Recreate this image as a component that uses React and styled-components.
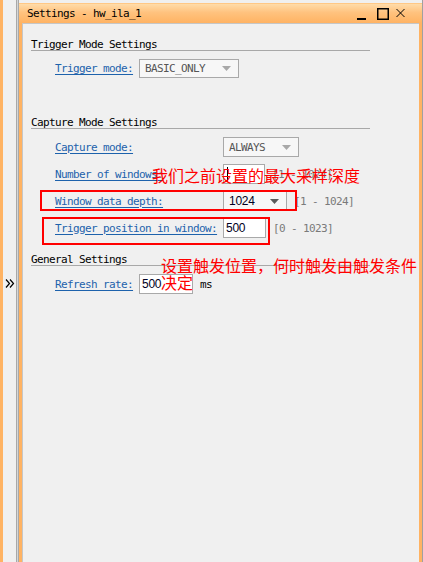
import React from 'react';
import styled, { createGlobalStyle } from 'styled-components';

const MONO = '"DejaVu Sans Mono", "Liberation Mono", monospace';
const ORANGE = '#ffb363';

const Global = createGlobalStyle`
  html, body { margin: 0; padding: 0; background: #f0f0f0; }
  body { font-family: ${MONO}; }
`;

const Root = styled.div`
  display: flex;
  width: 423px;
  height: 562px;
  background: #f0f0f0;
  box-sizing: border-box;
  border-right: 1px solid #a0a0a0;
  overflow: hidden;
`;

const Dock = styled.div`
  width: 16px;
  box-sizing: border-box;
  border-left: 3px solid ${ORANGE};
  display: flex;
  align-items: center;
  justify-content: center;
  padding-top: 5px;
`;

const Splitter = styled.div`
  width: 3px;
  box-sizing: border-box;
  border-left: 1px solid #a8a8a8;
  border-right: 1px solid #a8a8a8;
  background: #d6d6d6;
`;

const Window = styled.div`
  flex: 1;
  margin-top: 3px;
  display: flex;
  flex-direction: column;
  border-left: 3px solid ${ORANGE};
  border-right: 3px solid ${ORANGE};
`;

const TitleBar = styled.div`
  height: 20px;
  margin-left: -3px;
  margin-right: -3px;
  padding: 0 17px 0 8px;
  display: flex;
  align-items: center;
  justify-content: space-between;
  background: linear-gradient(#ffdcaa, #ffc27e 45%, ${ORANGE});
  border-top: 1px solid #ffc886;
  box-sizing: border-box;
`;

const Title = styled.span`
  font-size: 11px;
  letter-spacing: -0.62px;
  color: #000;
`;

const WinButtons = styled.div`
  display: flex;
  align-items: center;
`;

const WinButton = styled.span`
  display: flex;
  margin-left: ${p => p.$gap || 0}px;
`;

const Panel = styled.div`
  position: relative;
  flex: 1;
  background: #f0f0f0;
  border-top: 1px solid #c6c6c6;
  border-left: 1px solid #c6c6c6;
  padding-top: 15px;
`;

const Section = styled.div`
  margin-top: ${p => p.$top || 0}px;
`;

const Header = styled.div`
  margin-left: 8px;
  width: 339px;
  height: 11px;
  line-height: 11px;
  font-size: 11px;
  letter-spacing: -0.62px;
  color: #000;
  border-bottom: 1px solid #a8a8a8;
`;

const Rows = styled.div`
  display: grid;
  grid-template-columns: max-content auto;
  column-gap: 6px;
  row-gap: 7px;
  margin-top: 8px;
  padding-left: 32px;
  grid-auto-rows: ${p => p.$h || 20}px;
`;

const Label = styled.a`
  align-self: center;
  font-size: 11px;
  letter-spacing: -0.62px;
  color: #1d62ac;
  text-decoration: underline;
  text-underline-offset: 2px;
  white-space: nowrap;
`;

const Cell = styled.div`
  display: flex;
  align-items: center;
  gap: 7px;
`;

const Combo = styled.div`
  width: ${p => p.$w}px;
  height: 100%;
  box-sizing: border-box;
  border: 1px solid #a9a9a9;
  background: #f7f7f7;
  display: flex;
  align-items: center;
  justify-content: space-between;
  padding: 0 7px 0 5px;
`;

const ComboText = styled.span`
  font-family: ${p => (p.$sans ? '"Liberation Sans", Arial, sans-serif' : MONO)};
  font-size: ${p => (p.$sans ? '12px' : '11px')};
  letter-spacing: ${p => (p.$sans ? '-0.3px' : '-0.62px')};
  color: ${p => (p.$sans ? '#000022' : '#555')};
`;

const Input = styled.div`
  position: relative;
  width: ${p => p.$w}px;
  height: 100%;
  box-sizing: border-box;
  border: 1px solid #a9a9a9;
  background: #fff;
  display: flex;
  align-items: center;
  padding-left: 2px;
  font-family: "Liberation Sans", Arial, sans-serif;
  font-size: 12px;
  letter-spacing: -0.3px;
  color: #000022;
`;

const Caret = styled.span`
  width: 1px;
  height: 15px;
  margin-left: 1px;
  background: #000;
`;

const Range = styled.span`
  font-size: 11px;
  letter-spacing: -0.62px;
  color: #7a7a7a;
  white-space: nowrap;
`;

const Unit = styled.span`
  font-size: 11px;
  letter-spacing: -0.62px;
  color: #000;
`;

const Note = styled.div`
  position: absolute;
  left: ${p => p.$x}px;
  top: ${p => p.$y}px;
  width: ${p => p.$w || 'auto'};
  font-family: "Noto Sans CJK SC", sans-serif;
  font-size: 16px;
  line-height: 17px;
  color: #ff0000;
  white-space: ${p => (p.$w ? 'normal' : 'nowrap')};
`;

const Mark = styled.div`
  position: absolute;
  left: ${p => p.$x}px;
  top: ${p => p.$y}px;
  width: ${p => p.$w}px;
  height: ${p => p.$h}px;
  box-sizing: border-box;
  border: 2px solid #ff0000;
`;

const Arrow = ({ dark }) => (
  <svg width="9" height="5" viewBox="0 0 9 5">
    <path d="M0 0 L9 0 L4.5 5 Z" fill={dark ? '#5a5a5a' : '#a8a8a8'} />
  </svg>
);

const DoubleChevron = () => (
  <svg width="10" height="9" viewBox="0 0 10 9">
    <path d="M1 0.5 L4.5 4.5 L1 8.5 M5 0.5 L8.5 4.5 L5 8.5" stroke="#000" strokeWidth="1.2" fill="none" />
  </svg>
);

const Minimize = () => (
  <svg width="9" height="12" viewBox="0 0 9 12">
    <rect x="0" y="10" width="9" height="2" fill="#000" />
  </svg>
);

const Maximize = () => (
  <svg width="12" height="12" viewBox="0 0 12 12">
    <rect x="0.75" y="0.75" width="10.5" height="10.5" fill="none" stroke="#000" strokeWidth="1.5" />
  </svg>
);

const Close = () => (
  <svg width="9" height="12" viewBox="0 0 9 12">
    <path d="M0.5 1 L8.5 9 M8.5 1 L0.5 9" stroke="#000" strokeWidth="1" fill="none" />
  </svg>
);

export default function App() {
  return (
    <>
      <Global />
      <Root>
        <Dock>
          <DoubleChevron />
        </Dock>
        <Splitter />
        <Window>
          <TitleBar>
            <Title>Settings - hw_ila_1</Title>
            <WinButtons>
              <WinButton><Minimize /></WinButton>
              <WinButton $gap={11}><Maximize /></WinButton>
              <WinButton $gap={7}><Close /></WinButton>
            </WinButtons>
          </TitleBar>
          <Panel>
            <Section>
              <Header>Trigger Mode Settings</Header>
              <Rows $h={19}>
                <Label>Trigger mode:</Label>
                <Cell>
                  <Combo $w={100}>
                    <ComboText>BASIC_ONLY</ComboText>
                    <Arrow />
                  </Combo>
                </Cell>
              </Rows>
            </Section>

            <Section $top={39}>
              <Header>Capture Mode Settings</Header>
              <Rows>
                <Label>Capture mode:</Label>
                <Cell>
                  <Combo $w={76}>
                    <ComboText>ALWAYS</ComboText>
                    <Arrow />
                  </Combo>
                </Cell>

                <Label>Number of windows:</Label>
                <Cell>
                  <Input $w={42}>
                    <Caret />
                  </Input>
                  <Range>[1 - 1024]</Range>
                </Cell>

                <Label>Window data depth:</Label>
                <Cell>
                  <Combo $w={64}>
                    <ComboText $sans>1024</ComboText>
                    <Arrow dark />
                  </Combo>
                  <Range>[1 - 1024]</Range>
                </Cell>

                <Label>Trigger position in window:</Label>
                <Cell>
                  <Input $w={43}>500</Input>
                  <Range>[0 - 1023]</Range>
                </Cell>
              </Rows>
            </Section>

            <Section $top={16}>
              <Header>General Settings</Header>
              <Rows>
                <Label>Refresh rate:</Label>
                <Cell>
                  <Input $w={54}>500</Input>
                  <Unit>ms</Unit>
                </Cell>
              </Rows>
            </Section>

            <Mark $x={17} $y={166} $w={257} $h={21} />
            <Mark $x={19} $y={193} $w={228} $h={28} />
            <Note $x={129} $y={143}>我们之前设置的最大采样深度</Note>
            <Note $x={138} $y={233} $w="258px">设置触发位置，何时触发由触发条件决定</Note>
          </Panel>
        </Window>
      </Root>
    </>
  );
}
